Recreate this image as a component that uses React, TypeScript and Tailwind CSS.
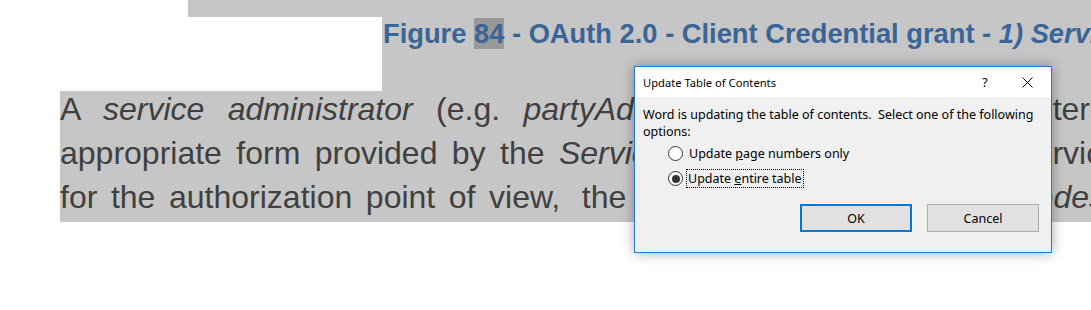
import React from 'react';

const Radio = ({ checked }: { checked?: boolean }) => (
  <span className="w-[15px] h-[15px] rounded-full border border-[#333333] bg-white flex items-center justify-center shrink-0">
    {checked && <span className="w-[8px] h-[8px] rounded-full bg-[#333333]" />}
  </span>
);

const TocDialog = () => (
  <div className="absolute left-[634px] top-[66px] w-[418px] h-[187px] border border-[#1a7fd4] bg-[#f0f0f0] shadow-[0_0_12px_rgba(0,0,0,0.35)] font-['Noto_Sans',sans-serif] text-[12.5px] leading-[17px] text-black">
    <div className="h-[30px] bg-white flex items-center pl-[8px]">
      <span className="flex-1 text-[11.2px]">Update Table of Contents</span>
      <span className="w-[20px] text-center mr-[27px]">?</span>
      <svg width="11" height="11" viewBox="0 0 11 11" className="mr-[18px]">
        <path d="M0.5 0.5 L10.5 10.5 M10.5 0.5 L0.5 10.5" stroke="#000" strokeWidth="1" />
      </svg>
    </div>
    <div className="px-[8px] pt-[9px]">
      <p className="whitespace-pre">Word is updating the table of contents.  Select one of the following</p>
      <p>options:</p>
      <div className="mt-[1px] pl-[25px]">
        <div className="flex items-center h-[25px] gap-[5px]">
          <Radio />
          <span className="px-[1px]">Update <u>p</u>age numbers only</span>
        </div>
        <div className="flex items-center h-[25px] gap-[3px]">
          <Radio checked />
          <span className="px-[1px] border border-dotted border-black leading-[17px]">Update <u>e</u>ntire table</span>
        </div>
      </div>
      <div className="flex justify-end gap-[15px] mt-[13px] pr-[4px]">
        <button className="w-[112px] h-[28px] border-2 border-[#0078d7] bg-[#e1e1e1] leading-[17px]">OK</button>
        <button className="w-[112px] h-[28px] border border-[#adadad] bg-[#e1e1e1] leading-[17px]">Cancel</button>
      </div>
    </div>
  </div>
);

export default function App() {
  return (
    <div className="relative w-[1091px] h-[310px] overflow-hidden bg-white font-['Liberation_Sans',Arial,sans-serif]">
      <div className="flex h-[17px]">
        <div className="w-[188px] shrink-0" />
        <div className="flex-1 bg-[#c6c6c6]" />
      </div>
      <div className="flex h-[74px]">
        <div className="w-[382px] shrink-0" />
        <div className="flex-1 bg-[#c6c6c6] pt-[1px] pl-[1px] whitespace-nowrap overflow-hidden text-[27.3px] leading-[31px] font-bold text-[#3b6497]">
          Figure <span className="bg-[#989898]">84</span> - OAuth 2.0 - Client Credential grant - <i>1) Service administrator registration</i>
        </div>
      </div>
      <div className="flex h-[131px]">
        <div className="w-[60px] shrink-0" />
        <div className="flex-1 bg-[#c6c6c6] overflow-hidden text-[32px] leading-[44px] text-[#404040] whitespace-nowrap">
          <div className="-mt-[4px]">
            <div className="flex w-[1046px] [word-spacing:14.5px]">
              <span>
                A <i>service</i> <i>administrator</i> (e.g. <i>partyAdmin</i>)
              </span>
              <span className="ml-auto">enters</span>
            </div>
            <div className="flex w-[1060px] [word-spacing:5.5px]">
              <span>
                appropriate form provided by the <i>Service Provider</i>
              </span>
              <span className="ml-auto">service</span>
            </div>
            <div className="flex w-[1045px] [word-spacing:4.7px]">
              <span>
                for the authorization point of view,<span className="pl-[8px]"> the</span>
              </span>
              <i className="ml-auto">nodes</i>
            </div>
          </div>
        </div>
      </div>
      <TocDialog />
    </div>
  );
}
